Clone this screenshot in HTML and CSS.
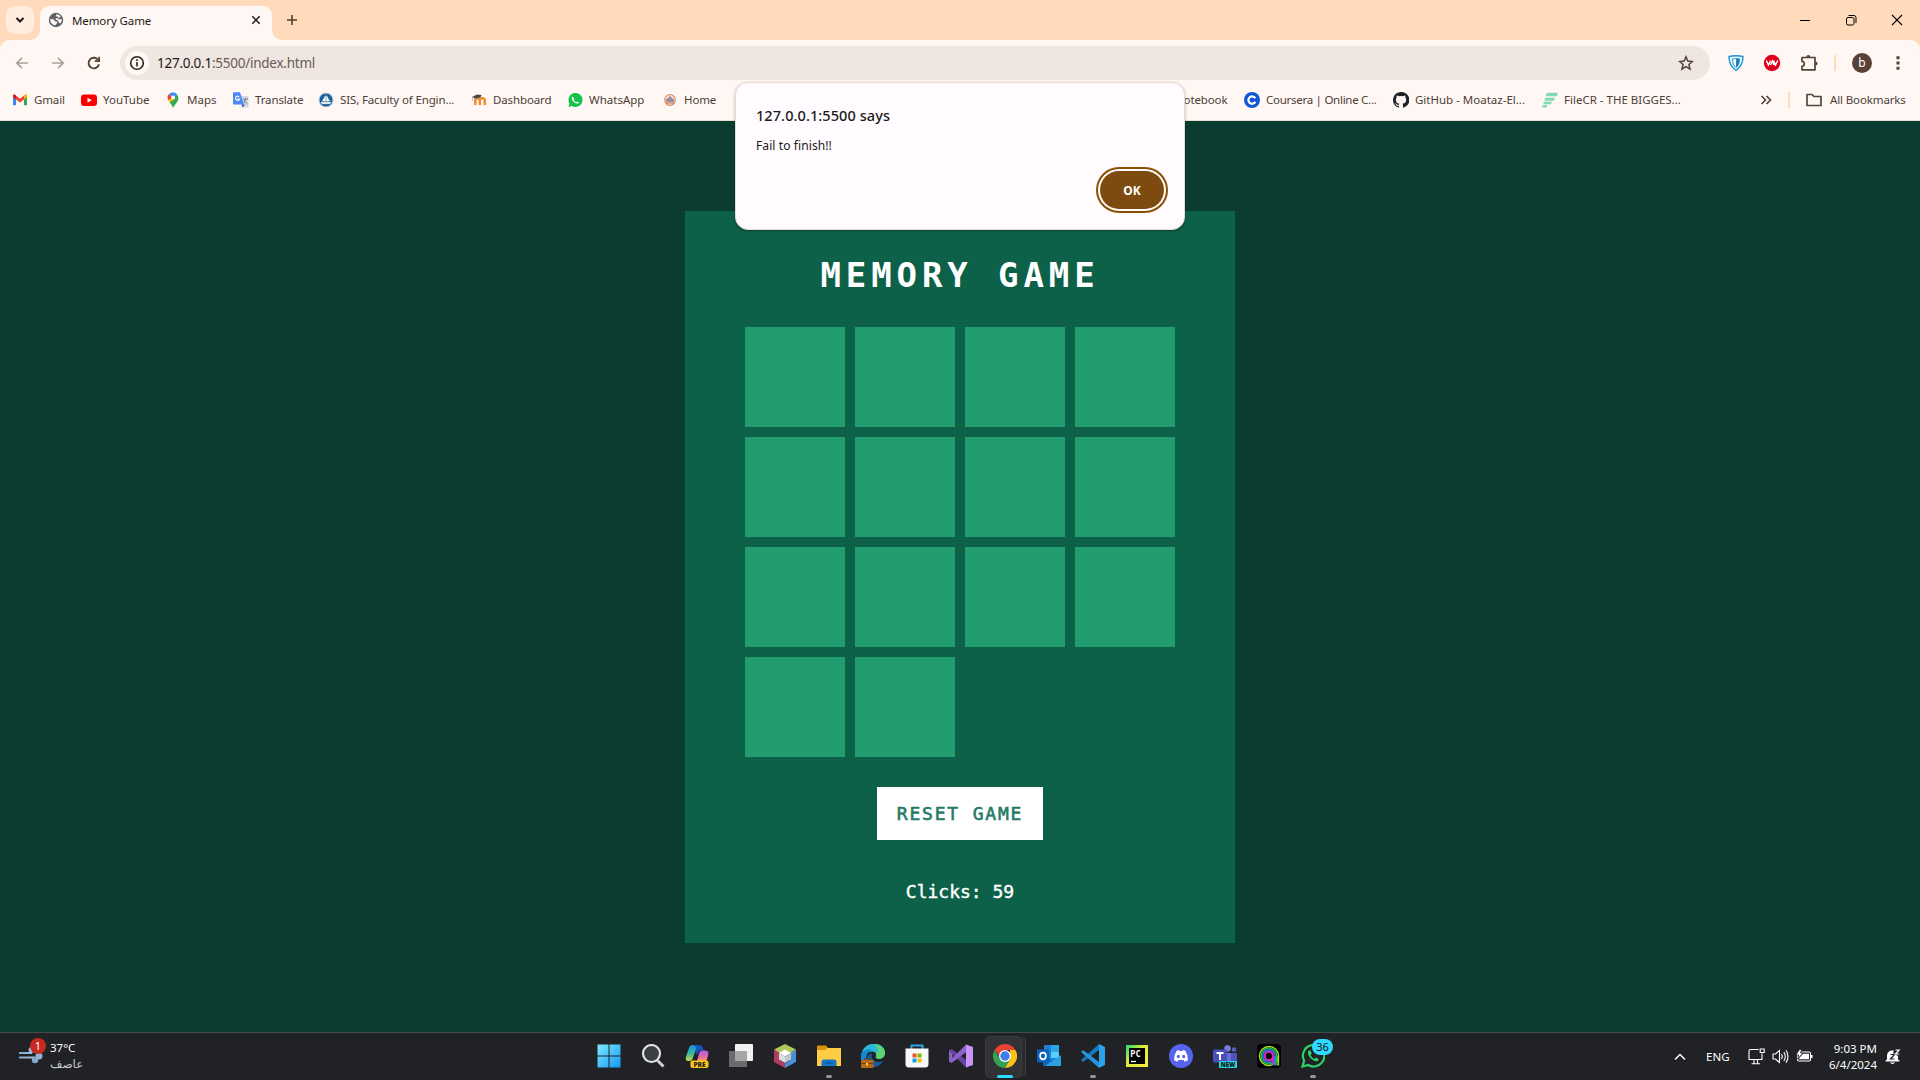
FILE: index.html
```html
<!DOCTYPE html>
<html lang="en">
<head>
<meta charset="utf-8">
<title>Memory Game</title>
<link rel="stylesheet" href="styles.css">
</head>
<body>
<div class="browser">
  <header class="tabstrip">
    <div class="tab-search"><svg width="28" height="28" viewBox="0 0 28 28"><path d="M10.5 12l3.5 3.5 3.5-3.5" fill="none" stroke="#1f1a17" stroke-width="2"/></svg></div>
    <div class="tab">
      <svg width="16" height="16" viewBox="0 0 16 16"><circle cx="8" cy="8" r="7.200" fill="#5f6368"/><path d="M2.200 7l3.300.3 1.700 2.200h2v1.300l-1.700 2.400C4.500 13.200 2.200 11 2.200 7zM8.500 2.300c2-.1 3.500 1 4.300 2.500L11 5.500 9.800 7.300h4c.1 1.800-.6 3.300-1.700 4.200l-1.400-1.300-.6-1.700-2.600-.9.400-1.400H10l.4-1.500-2.700-.4z" fill="#fff7f3"/></svg>
      <span class="tab-title">Memory Game</span>
      <svg class="tab-close" width="10" height="10" viewBox="0 0 10 10"><path d="M1.300 1.300l7.400 7.400M8.700 1.300l-7.400 7.400" stroke="#1f1a17" stroke-width="1.500"/></svg>
    </div>
    <svg class="newtab" width="12" height="12" viewBox="0 0 12 12"><path d="M6 1v10M1 6h10" stroke="#54412f" stroke-width="1.600"/></svg>
    <div class="window-buttons">
      <svg width="12" height="12" viewBox="0 0 12 12"><path d="M1 6.500h10" stroke="#000"/></svg>
      <svg width="12" height="12" viewBox="0 0 12 12"><rect x="1.500" y="3.500" width="7.500" height="7.500" rx="1.500" fill="none" stroke="#000"/><path d="M3.500 1.500H9q2 0 2 2V9" fill="none" stroke="#000"/></svg>
      <svg width="12" height="12" viewBox="0 0 12 12"><path d="M1 1l10 10M11 1L1 11" stroke="#000" stroke-width="1.100"/></svg>
    </div>
  </header>

  <div class="toolbar">
    <svg class="nav" width="14" height="14" viewBox="0 0 14 14"><path d="M13 7H2M7 1.800L1.800 7 7 12.200" fill="none" stroke="#aaa19d" stroke-width="1.700"/></svg>
    <svg class="nav" width="14" height="14" viewBox="0 0 14 14"><path d="M1 7h11M7 1.800L12.200 7 7 12.200" fill="none" stroke="#aaa19d" stroke-width="1.700"/></svg>
    <svg class="nav" width="14" height="14" viewBox="0 0 14 14"><path d="M12 8.300A5.300 5.300 0 1 1 11.200 4" fill="none" stroke="#54412f" stroke-width="1.900"/><path d="M13 .8V6H7.800V4.300h3.500V.8z" fill="#54412f"/></svg>
    <div class="omnibox">
      <div class="site-info"><svg width="16" height="16" viewBox="0 0 16 16"><circle cx="8" cy="8" r="6.300" fill="none" stroke="#2b211c" stroke-width="1.600"/><path d="M8 7v4.500M8 4.300v1.600" stroke="#2b211c" stroke-width="1.600"/></svg></div>
      <span class="url"><b>127.0.0.1</b>:5500/index.html</span>
      <svg class="star" width="16" height="16" viewBox="0 0 16 16"><path d="M8 1.800l1.800 4.300 4.600.4-3.500 3 1.100 4.600L8 11.600l-4 2.500 1.100-4.600-3.500-3 4.600-.4z" fill="none" stroke="#54433b" stroke-width="1.500"/></svg>
    </div>
    <div class="extensions">
      <svg width="16" height="18" viewBox="0 0 16 18"><path d="M1 2.500c5-1 9-1 14 0 0 6-2 10.500-7 14-5-3.500-7-8-7-14z" fill="#e8f6fd" stroke="#1c95d4" stroke-width="1.400"/><path d="M4.500 5C7 4.500 9 4.500 11.500 5c0 4-1 6.500-3.500 8.500C5.500 11.500 4.500 9 4.500 5z" fill="#fff" stroke="#1c95d4"/><path d="M8 4.500c1.500 0 2.700.1 3.700.5 0 4-1.200 6.500-3.700 8.700z" fill="#1c83c4"/></svg>
      <svg width="18" height="18" viewBox="0 0 18 18"><circle cx="9" cy="9" r="8.200" fill="#e2001f"/><path d="M3.300 6.500l2.200 4.500 2.200-4.500M7.500 11l2-4 1.500 4M10.500 6.500l2 4.500 2.200-4.500" fill="none" stroke="#fff" stroke-width="1.500"/></svg>
      <svg width="18" height="18" viewBox="0 0 18 18"><path d="M2 3.500h13v12.300H2v-3.500c3 0 3-5 0-5z" fill="none" stroke="#54412f" stroke-width="1.700" stroke-linejoin="round"/><path d="M6.300 3a2 2 0 0 1 4 0M15.500 7.500a2 2 0 0 1 0 4" fill="#54412f"/></svg>
      <i class="divider"></i>
      <span class="avatar">b</span>
      <svg width="4" height="16" viewBox="0 0 4 16"><path d="M.5 1.200h3v3h-3zM.5 6.500h3v3h-3zM.5 11.800h3v3h-3z" fill="#54412f"/></svg>
    </div>
  </div>

  <nav class="bookmarks">
    <div class="bookmark"><svg width="16" height="16" viewBox="0 0 16 16"><path d="M1 4v9.300h3V7z" fill="#4285f4"/><path d="M15 4v9.300h-3V7z" fill="#34a853"/><path d="M1 3.500Q1.700 2 3.300 3L8 6.700 12.700 3Q14.300 2 15 3.500V5L8 10.500 1 5z" fill="#ea4335"/><path d="M12 3.500l.7-.5Q14.300 2 15 3.500V5l-3 2.400z" fill="#fbbc04"/><path d="M1 3.500Q1.700 2 3.300 3l.7.5v3.900L1 5z" fill="#c5221f"/></svg><span class="tight">Gmail</span></div>
    <div class="bookmark"><svg width="16" height="16" viewBox="0 0 16 16"><rect y="2.500" width="16" height="11.500" rx="3" fill="#f00"/><path d="M6.500 5.800v5l4.200-2.500z" fill="#fff"/></svg><span>YouTube</span></div>
    <div class="bookmark"><svg width="16" height="16" viewBox="0 0 16 16"><path d="M8 16c-.8-2.500-2-4-3.500-6L12 2.500C14.500 6 13.500 8.500 11 11.500 9.500 13.500 8.500 14.500 8 16z" fill="#34a853"/><path d="M4.800 10.500L3.200 8 8 4.500l2 2z" fill="#fbbc04"/><path d="M4 2.300L8 5.500 3.200 8C2 6 2.500 3.500 4 2.300z" fill="#ea4335"/><path d="M4 2.300C6 0 10-.2 12 2.300L8.500 6z" fill="#4285f4"/><circle cx="8" cy="5.600" r="2" fill="#fff"/></svg><span>Maps</span></div>
    <div class="bookmark"><svg width="16" height="16" viewBox="0 0 16 16"><path d="M6 4h9.500v11.500H9z" fill="#d5d9df"/><path d="M8.500 12.500h3.500l-2.500 3z" fill="#3354bd"/><path d="M0 1.300Q0 .3 1 .3h6l4 12.200H1q-1 0-1-1z" fill="#4a8af4"/><path d="M6.300 5A2.100 2.100 0 1 0 6.600 7H4.500" fill="none" stroke="#fff" stroke-width="1.100"/><path d="M10 7h5M12.500 6v1c0 2-1 3-2 4M11 8c.5 1.500 1.800 2.500 3.500 4" fill="none" stroke="#667c8c" stroke-width=".9"/></svg><span class="tight">Translate</span></div>
    <div class="bookmark"><svg width="16" height="16" viewBox="0 0 16 16"><circle cx="8" cy="8" r="7" fill="#1c5e97" stroke="#bdd0df"/><path d="M8 2.500V10M7.300 4L4.500 9h2.800zM8.700 4l2.800 5H8.700zM3 10.200h10l-1 1.500H4z" fill="#fff" stroke="#fff" stroke-width=".5"/></svg><span class="tight">SIS, Faculty of Engin...</span></div>
    <div class="bookmark"><svg width="16" height="16" viewBox="0 0 16 16"><path d="M4.300 13V8.500c0-3 4.500-3 4.500 0V13M8.800 8.500c0-3 5-3 5 0V13" fill="none" stroke="#ef8b30" stroke-width="2.500"/><path d="M1 5l5-2.500 4.500.5-1 2.500L4 6.500z" fill="#4b4745"/><path d="M1.500 5v4" stroke="#cbb"/></svg><span class="tight">Dashboard</span></div>
    <div class="bookmark"><svg width="16" height="16" viewBox="0 0 16 16"><path d="M1.500 15l.9-3.600A7 7 0 1 1 5 14z" fill="#16c24a"/><path d="M5.500 4.500C4 6 5 8.300 7 10s4 2.200 5 .7l-1.800-1.200-1 .8Q7.500 9.500 6.500 7.800l.7-1z" fill="#fff"/></svg><span>WhatsApp</span></div>
    <div class="bookmark"><svg width="16" height="16" viewBox="0 0 16 16"><circle cx="8" cy="8" r="5.300" fill="#f4eeee" stroke="#e98f55" stroke-width="1.200"/><path d="M4 10V7l2-1 2-2.500L10 6l2 1v3z" fill="#9b8f9b"/><path d="M4 11h8" stroke="#c75a44"/></svg><span class="tight">Home</span></div>
    <div class="bookmark"><svg width="16" height="16" viewBox="0 0 16 16"><circle cx="8" cy="8" r="5" fill="#444"/></svg></div>
    <div class="bookmark"><span class="tight">Notebook</span></div>
    <div class="bookmark"><svg width="16" height="16" viewBox="0 0 16 16"><circle cx="8" cy="8" r="8" fill="#0f56d8"/><path d="M11.300 6.300A3.700 3.700 0 1 0 11.300 9.900" fill="none" stroke="#fff" stroke-width="2.200"/></svg><span class="tighter">Coursera | Online C...</span></div>
    <div class="bookmark"><svg width="16" height="16" viewBox="0 0 16 16"><path d="M8 0C3.600 0 0 3.600 0 8c0 3.500 2.300 6.500 5.500 7.600.4.100.5-.2.500-.4v-1.400c-2.200.5-2.700-.9-2.700-.9-.4-.9-.9-1.200-.9-1.200-.7-.5.100-.5.100-.5.800.1 1.200.8 1.200.8.700 1.200 1.900.9 2.300.7.100-.5.300-.9.500-1.100C4.700 11.400 2.900 10.700 2.900 7.700c0-.9.300-1.600.8-2.100-.1-.2-.4-1 .1-2.100 0 0 .7-.2 2.200.8a7.600 7.600 0 0 1 4 0c1.500-1 2.200-.8 2.200-.8.400 1.100.2 1.900.1 2.100.5.600.8 1.300.8 2.100 0 3.100-1.900 3.700-3.700 3.900.3.300.6.700.6 1.500v2.200c0 .2.100.5.500.4A8 8 0 0 0 8 0z" fill="#1f2328"/></svg><span>GitHub - Moataz-El...</span></div>
    <div class="bookmark"><svg width="16" height="16" viewBox="0 0 16 16"><path d="M5 .7h11l-1 3.500H3.700zM3.300 5.700H13l-1.200 3H2.500zM2 9.700h8l-1 2.500H1.200zM1 13h4.500l-1 2.500H0z" fill="#7edcb5"/></svg><span>FileCR - THE BIGGES...</span></div>
    <svg class="more" width="12" height="10" viewBox="0 0 12 10"><path d="M1.500 1l4 4-4 4M6.500 1l4 4-4 4" fill="none" stroke="#54433b" stroke-width="1.700"/></svg>
    <i class="divider"></i>
    <div class="bookmark all"><svg width="18" height="16" viewBox="0 0 18 16"><path d="M2 2.500h5l2 2h7v9H2z" fill="none" stroke="#54433b" stroke-width="1.700" stroke-linejoin="round"/></svg><span class="tight">All Bookmarks</span></div>
  </nav>

  <main class="page">
    <section class="game">
      <h1>MEMORY GAME</h1>
      <div class="board">
        <div class="card"></div><div class="card"></div><div class="card"></div><div class="card"></div>
        <div class="card"></div><div class="card"></div><div class="card"></div><div class="card"></div>
        <div class="card"></div><div class="card"></div><div class="card"></div><div class="card"></div>
        <div class="card"></div><div class="card"></div>
      </div>
      <button class="reset">RESET GAME</button>
      <p class="clicks">Clicks: 59</p>
    </section>
  </main>

  <div class="alert">
    <h2>127.0.0.1:5500 says</h2>
    <p>Fail to finish!!</p>
    <button class="ok">OK</button>
  </div>
</div>

<footer class="taskbar">
  <div class="weather">
    <div class="weather-icon">
      <svg width="26" height="20" viewBox="0 0 26 20"><defs><linearGradient id="wind" x2="1"><stop stop-color="#7fa9d6"/><stop offset="1" stop-color="#a9bfd8"/></linearGradient></defs><path d="M1 7h13v2H1zM1 11.500h16v2H1z" fill="url(#wind)"/><circle cx="13.500" cy="5" r="3" fill="#9fb9d5"/><circle cx="17" cy="15" r="3.200" fill="#86a5c8"/><circle cx="21" cy="11" r="3.500" fill="#93b0d0"/></svg>
      <span class="count">1</span>
    </div>
    <div class="weather-text"><span>37°C</span><span class="arabic" lang="ar">عاصف</span></div>
  </div>

  <div class="apps">
    <div class="app"><svg viewBox="0 0 24 24"><defs><linearGradient id="win" x2="1" y2="1"><stop stop-color="#7deaff"/><stop offset="1" stop-color="#1597f5"/></linearGradient></defs><path d="M.5.500h11v11H.5zM12.500.500h11v11h-11zM.5 12.500h11v11H.5zM12.500 12.500h11v11h-11z" fill="url(#win)"/></svg></div>
    <div class="app"><svg viewBox="0 0 24 24"><path d="M16.500 16.500l6 6" stroke="#cfcfcf" stroke-width="3"/><circle cx="10.500" cy="9.500" r="8.500" fill="#3c3f42" stroke="#e2e2e2" stroke-width="2.200"/></svg></div>
    <div class="app"><svg viewBox="0 0 24 24"><defs><linearGradient id="cpl" x2="0" y2="1"><stop stop-color="#1b8fe0"/><stop offset=".5" stop-color="#35b6a0"/><stop offset="1" stop-color="#c6d63c"/></linearGradient><linearGradient id="cpr" x2="0" y2="1"><stop stop-color="#a65cf0"/><stop offset=".6" stop-color="#e86aa0"/><stop offset="1" stop-color="#f79a5a"/></linearGradient></defs><path d="M7.500 1H14q-2 1-3 4L7.500 15q-.8 2-3 2H3Q0 17 .9 13L4 4Q5 1 7.500 1z" fill="url(#cpl)"/><path d="M8 1h7q2 0 2.700 2.500l.8 2.500H16q-2 0-3 2.500L12 11l-2-3 1-3q.5-2-3-4z" fill="#1553bd"/><path d="M16.500 6.500H20q4.200 0 3.300 4L21.500 17H12l2-7.500q.7-3 2.500-3z" fill="url(#cpr)"/><rect x="5.500" y="16.500" width="18" height="7.500" rx="2" fill="#ffc516"/><text x="14.500" y="22.700" text-anchor="middle" class="pre">PRE</text></svg></div>
    <div class="app"><svg viewBox="0 0 24 24"><rect y="7" width="18" height="16" fill="#6b6b6b"/><rect x="6" y="0" width="18" height="17" rx="1" fill="#f1f1f1"/><path d="M6 7h12v10H6z" fill="#a6a6a6"/></svg></div>
    <div class="app"><svg viewBox="0 0 24 24"><path d="M12 0l11 5.500-6 4-5-3-5 3-6-4z" fill="#b0c75b"/><path d="M1 5.500l6 4v7l5 3V24L1 18z" fill="#b23b62"/><path d="M23 5.500l-6 4v7l-5 3V24l11-6z" fill="#4a8fd8"/><path d="M12 5.500l6 3.500-6 3.500L6 9z" fill="#fff"/><path d="M6 9l6 3.500V19l-6-3.500z" fill="#dedede"/><path d="M18 9l-6 3.500V19l6-3.500z" fill="#bfc7cd"/></svg></div>
    <div class="app running"><svg viewBox="0 0 24 24"><path d="M0 2.500Q0 1.500 1 1.500h8l2 2.500-2 3H0z" fill="#d99408"/><path d="M0 6h8l2.500-2H24v18H0z" fill="#ffcc45"/><path d="M4.500 22v-4q0-2.500 2.500-2.500h10q2.500 0 2.500 2.500v4z" fill="#1478c8"/><path d="M8 19h8" stroke="#0c569c" stroke-width="1.300"/></svg></div>
    <div class="app"><svg viewBox="0 0 24 24"><path d="M0 14C0-4.500 24-4 24 9c0 6-7 7-9.500 4.500 2-2 .5-6-3.500-6-5 0-9 4-11 6.500z" fill="#29b8dc"/><path d="M12 .2C19 .2 24 4 24 9c0 6-7 7-9.500 4.500 1-1 1-2.500.500-3.500 3-2 3-7-3-9.800z" fill="#5ed56a"/><path d="M11 9c-2 7 4 11 11 8-3 6-9 7-13 6-6-3-5-12 2-14z" fill="#155a9f"/><path d="M0 10c2-3 6-6 11-4-5 2-6 6-6 10H0z" fill="#1688d2"/><rect y="16" width="12.500" height="8" rx="1" fill="#b86b16"/><path d="M4 16v-1.500h4.500V16M0 19.500h12.500" fill="none" stroke="#7d430c" stroke-width="1.200"/><rect x="5" y="19" width="2" height="2.500" fill="#ffc94a"/></svg></div>
    <div class="app"><svg viewBox="0 0 24 24"><path d="M6.500 5V1.500h11V5" fill="none" stroke="#29a6e8" stroke-width="2"/><path d="M.5 4.500h23V20q0 3.500-3.500 3.500H4Q.500 23.500.500 20z" fill="#f7f7f7"/><path d="M7.500 9.500h4v4h-4z" fill="#f25022"/><path d="M12.500 9.500h4v4h-4z" fill="#7fba00"/><path d="M7.500 14.500h4v4h-4z" fill="#00a4ef"/><path d="M12.500 14.500h4v4h-4z" fill="#ffb900"/></svg></div>
    <div class="app"><svg viewBox="0 0 24 24"><path d="M0 6.500L2.500 5 20 18l-3 5.500z" fill="#6a42a5"/><path d="M0 6.500v11L2.500 19 20 6 17 .5 3.500 14V10z" fill="#8e62cb"/><path d="M17 .5L24 3v18l-7 2.500z" fill="#c795f7"/></svg></div>
    <div class="app active"><svg viewBox="0 0 24 24"><path d="M1.600 6a12 12 0 0 1 20.800 0H12L8 14z" fill="#e94235"/><path d="M22.400 6A12 12 0 0 1 12 24l5-9V6z" fill="#fbc116"/><path d="M1.600 6A12 12 0 0 0 12 24l5.200-9L7 15z" fill="#34a350"/><circle cx="12" cy="12" r="6" fill="#fff"/><circle cx="12" cy="12" r="4.700" fill="#3f7fea"/></svg></div>
    <div class="app"><svg viewBox="0 0 24 24"><rect x="7" y="1" width="15" height="20" rx="1" fill="#1b83d3"/><path d="M14 1h8v7h-8z" fill="#2ba4e8"/><path d="M14 8h8v6h-8z" fill="#56d0fa"/><path d="M6 22V11l18 11z" fill="#1467b8"/><path d="M24 11v11H8z" fill="#2da0e3"/><rect x="0" y="5.500" width="12" height="13" rx="1" fill="#0c62b8"/><ellipse cx="6" cy="12" rx="2.900" ry="3.300" fill="none" stroke="#fff" stroke-width="1.700"/></svg></div>
    <div class="app running"><svg viewBox="0 0 24 24"><path d="M0 16l2 2L18 6V0z" fill="#1679bd"/><path d="M0 8l2-2 16 12v6z" fill="#2494dc"/><path d="M18 0l6 3v18l-6 3z" fill="#2ca2ed"/></svg></div>
    <div class="app"><svg viewBox="0 0 24 24"><defs><linearGradient id="pc" x2="1" y2="1"><stop stop-color="#16d978"/><stop offset=".4" stop-color="#d7eb3d"/><stop offset="1" stop-color="#f6ec43"/></linearGradient></defs><rect x="1" y="1" width="22" height="22" fill="url(#pc)"/><rect x="4" y="4" width="16" height="16" fill="#000"/><path d="M6 17.500h5" stroke="#fff" stroke-width="1.300"/><text x="5.300" y="12.500" class="pc">PC</text></svg></div>
    <div class="app"><svg viewBox="0 0 24 24"><circle cx="12" cy="12" r="12" fill="#5663ec"/><path d="M7.500 7Q9 6.200 10 6l.5 1h3l.5-1q1.500.200 2.500 1 2.500 4 2.500 9-1.500 1.300-3.500 1.700l-1-1.700h-5l-1 1.700Q6.500 17.300 5 16q0-5 2.500-9z" fill="#fff"/><ellipse cx="9.300" cy="12.500" rx="1.500" ry="1.700" fill="#5663ec"/><ellipse cx="14.700" cy="12.500" rx="1.500" ry="1.700" fill="#5663ec"/></svg></div>
    <div class="app"><svg viewBox="0 0 24 24"><circle cx="14.500" cy="4.500" r="3.200" fill="#7880df"/><circle cx="21" cy="5.500" r="2.300" fill="#5961c9"/><path d="M10 9h14v10H10z" fill="#6970d6"/><path d="M18 9h6v9h-6z" fill="#4b53bc"/><rect y="5.500" width="14" height="13" rx="1" fill="#4850b9"/><path d="M3.500 9h7M7 9v7" stroke="#fff" stroke-width="2"/><rect x="6" y="17" width="18" height="7" rx="1" fill="#2cd5df"/><text x="15" y="22.800" text-anchor="middle" class="new">NEW</text></svg></div>
    <div class="app"><svg viewBox="0 0 24 24"><rect width="24" height="24" rx="4" fill="#000"/><g fill="none" stroke-width="1.500"><circle cx="12" cy="12" r="9.500" stroke="#b5d81b"/><circle cx="12" cy="12" r="7.900" stroke="#19b84e"/><circle cx="12" cy="12" r="6.300" stroke="#1a8be0"/><circle cx="12" cy="12" r="4.300" stroke="#db25c7" stroke-width="2.300"/><path d="M16.300 12v9" stroke="#db25c7" stroke-width="2"/><path d="M18.200 12v9.500" stroke="#1a8be0"/><path d="M19.800 12v9.500" stroke="#19b84e"/><path d="M21.400 12v9.500" stroke="#b5d81b"/></g></svg></div>
    <div class="app running"><svg viewBox="0 0 24 24"><path d="M1.500 22.500l1.600-5.800A10.700 10.700 0 1 1 7.200 21z" fill="none" stroke="#2bd267" stroke-width="2.200"/><path d="M8 6.500c-2.500 2-.5 5.500 2 8s6 4 7.500 1.500V15L15 13.500l-1.500 1.500Q11 14 9.500 11L10.800 9.500 9.500 6.500z" fill="#2bd267"/></svg><span class="chats">36</span></div>
  </div>

  <div class="tray">
    <svg width="12" height="8" viewBox="0 0 12 8"><path d="M1 6.500l5-5 5 5" fill="none" stroke="#fff" stroke-width="1.500"/></svg>
    <span class="lang">ENG</span>
    <div class="status">
      <svg width="17" height="17" viewBox="0 0 17 17"><path d="M10.500 1.500h-8q-1.500 0-1.500 1.500v8.500h13V8M6 12v3.500M9.500 12v3.500M3.500 15.800h8.500M14 8V5.500M12.200 1v3.500h4V1z" fill="none" stroke="#fff" stroke-width="1.100"/></svg>
      <svg width="17" height="17" viewBox="0 0 17 17"><path d="M1 6h2.500l4-3.500v12L3.500 11H1zM9.500 6q1.500 2.500 0 5M11.800 4q3 4.500 0 9M14 2.200q4 6.300 0 12.500" fill="none" stroke="#fff" stroke-width="1.100"/></svg>
      <svg width="17" height="17" viewBox="0 0 17 17"><rect x="1.500" y="4" width="13" height="9" rx="1.500" fill="none" stroke="#fff" stroke-width="1.100"/><path d="M7 5.700h6v5.600H3.200V10zM15 7h1.500v3H15z" fill="#fff"/><path d="M3.500 1.500L0 7h2.500L1.700 11l5.300-6H4.500l1.200-3.500z" fill="#fff" stroke="#202225" stroke-width=".8"/></svg>
    </div>
    <div class="clock"><span>9:03 PM</span><span>6/4/2024</span></div>
    <svg class="bell" width="16" height="16" viewBox="0 0 16 16"><path d="M2 10.500V6q1-4.500 5-4.500h2L8 4l5 3v3.500l1.500 1v1h-14v-1zM5 13.500h5q-2.500 3-5 0z" fill="#fff"/><path d="M5.500 5.500h4l-4 4.500h4" fill="none" stroke="#202225" stroke-width="1.200"/><path d="M10.500 1h3.700l-3.700 4h3.700" fill="none" stroke="#fff" stroke-width="1.200"/></svg>
  </div>
</footer>
</body>
</html>
```
FILE: styles.css
```css
* { box-sizing: border-box; }
body { margin: 0; width: 1920px; height: 1080px; overflow: hidden; display: flex; flex-direction: column; font-family: "Noto Sans", "Open Sans", sans-serif; font-size: 12px; }
svg { display: block; flex: none; }
h1, h2, p { margin: 0; }
button { border: 0; padding: 0; font: inherit; }
span { white-space: nowrap; }

.browser { position: relative; height: 1032px; background: #ffdbbb; display: flex; flex-direction: column; }

.tabstrip { height: 40px; padding: 6px 17px 0 6px; display: flex; align-items: flex-start; }
.tab-search { width: 28px; height: 28px; border-radius: 9px; background: #ffede0; }
.tab { position: relative; width: 232px; height: 34px; margin-left: 6px; padding: 0 11px 6px 8px; display: flex; align-items: center; background: #fff7f3; border-radius: 9px 9px 0 0; color: #1f1a17; }
.tab::before, .tab::after { content: ""; position: absolute; bottom: 0; width: 10px; height: 10px; }
.tab::before { left: -10px; background: radial-gradient(circle at 0 0, transparent 9.500px, #fff7f3 10px); }
.tab::after { right: -10px; background: radial-gradient(circle at 100% 0, transparent 9.500px, #fff7f3 10px); }
.tab-title { margin-left: 8px; font-size: 11.500px; letter-spacing: -0.1px; padding-top: 1px; }
.tab-close { margin-left: auto; }
.newtab { margin: 8px 0 0 14px; }
.window-buttons { margin-left: auto; padding-top: 8px; display: flex; gap: 34px; }

.toolbar { height: 43px; padding: 6px 20px 0 15px; display: flex; align-items: flex-start; background: #fff7f3; border-radius: 9px 9px 0 0; }
.nav { margin: 10px 22px 0 0; }
.omnibox { width: 1590px; height: 34px; margin-left: -3px; padding: 0 16px 0 5px; display: flex; align-items: center; border-radius: 17px; background: #efe6e1; }
.site-info { width: 24px; height: 24px; border-radius: 50%; background: #fff7f3; display: grid; place-items: center; }
.url { margin-left: 8px; font-size: 13.500px; letter-spacing: -0.250px; color: #6a5b53; }
.url b { font-weight: 400; color: #1f1a17; }
.star { margin-left: auto; }
.extensions { height: 34px; margin-left: 18px; display: grid; grid-template-columns: 35px 37px 34px 18px 44px 4px; align-items: center; }
.divider { width: 2px; height: 16px; background: #ffdbbb; }
.avatar { width: 20px; height: 20px; border-radius: 50%; background: #5b4038; color: #fff; font-size: 12px; line-height: 19px; text-align: center; }

.bookmarks { height: 38px; padding: 0 12px 3px; display: grid; align-items: center; background: #fff7f3; border-bottom: 1px solid #eadfd8; color: #4c4039;
  grid-template-columns: 69px 84px 68px 85px 153px 96px 95px 70px 443px 69px 149px 149px 218px 28px 17px 1fr; }
.bookmark { display: flex; align-items: center; gap: 6px; font-size: 11.500px; }
.bookmark span { position: relative; top: -1px; }
.bookmark.all { gap: 7px; }
.tight { letter-spacing: -0.130px; }
.tighter { letter-spacing: -0.270px; }

.page { flex: 1; display: flex; justify-content: center; align-items: flex-start; background: #0b3c30; padding-top: 90px; }
.game { width: 550px; height: 732px; padding: 40px 60px 0; display: flex; flex-direction: column; align-items: center; background: #0d6149; color: #fff; font-family: "DejaVu Sans Mono", monospace; }
.game h1 { font-size: 34px; line-height: 48px; letter-spacing: 4.900px; margin-bottom: 28px; }
.board { display: grid; grid-template-columns: repeat(4, 100px); grid-auto-rows: 100px; gap: 10px; }
.card { background: #219c6f; }
.reset { width: 166px; height: 53px; margin-top: 30px; background: #fff; color: #257b65; font-size: 18px; letter-spacing: 1.800px; -webkit-text-stroke: .6px #257b65; }
.clicks { margin-top: 40px; font-size: 18px; line-height: 24px; -webkit-text-stroke: .4px #fff; }

/* modal dialog raised over the page */
.alert { position: absolute; left: 735px; top: 82px; width: 450px; height: 148px; padding: 20px 20px; display: flex; flex-direction: column; background: #fffbff; border: 1px solid #ecdccf; border-radius: 13px; box-shadow: 0 1px 3px rgba(0, 0, 0, .3); color: #201a17; }
.alert h2 { font-size: 14.500px; line-height: 24px; font-weight: 500; letter-spacing: .08px; }
.alert p { margin-top: 9px; font-size: 12px; line-height: 20px; letter-spacing: .1px; }
.ok { align-self: flex-end; width: 64px; height: 38px; margin-top: 15px; border-radius: 19px; background: #7d4b0e; color: #fff; font-weight: 700; font-size: 12px; outline: 2px solid #8b5000; outline-offset: 2px; }

.taskbar { height: 48px; border-top: 1px solid #474a4b; background: #202225; color: #fff; display: flex; justify-content: space-between; }
.weather { width: 587px; padding: 7px 0 0 18px; display: flex; }
.weather-icon { position: relative; padding-top: 5px; width: 32px; }
.count { position: absolute; left: 12px; top: -2px; width: 16px; height: 16px; border-radius: 50%; background: #c8281e; line-height: 16px; text-align: center; font-size: 11px; }
.weather-text { display: flex; flex-direction: column; align-items: flex-start; font-size: 11.500px; line-height: 16px; }
.arabic { color: #c4c4c4; font-family: "DejaVu Sans", sans-serif; font-size: 12px; }
.apps { display: flex; }
.app { position: relative; width: 44px; height: 47px; display: grid; place-items: center; padding-bottom: 1px; }
.app svg { width: 24px; height: 24px; position: relative; }
.running::after, .active::after { content: ""; position: absolute; bottom: 2px; left: 19px; width: 6px; height: 3px; border-radius: 2px; background: #979797; }
.active::after { left: 14px; width: 16px; background: #2fd9ff; }
.active::before { content: ""; position: absolute; left: 2px; top: 3px; width: 35px; height: 40px; border-radius: 5px; background: #303236; border: 1px solid #3a3c3f; box-shadow: 4px 0 0 -1px #292b2e, 5px 0 0 -1px #3a3c3f; }
.chats { position: absolute; left: 21px; top: 6px; width: 21px; height: 16px; border-radius: 8px; background: #2fd9ff; color: #111; font-size: 11px; line-height: 16px; text-align: center; }
.pre { font: 900 6.500px "Noto Sans", sans-serif; fill: #222; }
.new { font: 900 6px "Noto Sans", sans-serif; fill: #111; }
.pc { font: 700 8.500px "DejaVu Sans Mono", monospace; fill: #fff; }
.tray { width: 585px; padding-right: 19px; display: flex; justify-content: flex-end; align-items: center; font-size: 11.500px; }
.lang { margin: 0 17px 0 20px; width: 25px; }
.status { display: flex; gap: 7px; }
.clock { width: 64px; display: flex; flex-direction: column; text-align: right; line-height: 16px; }
.bell { margin-left: 8px; }
```
